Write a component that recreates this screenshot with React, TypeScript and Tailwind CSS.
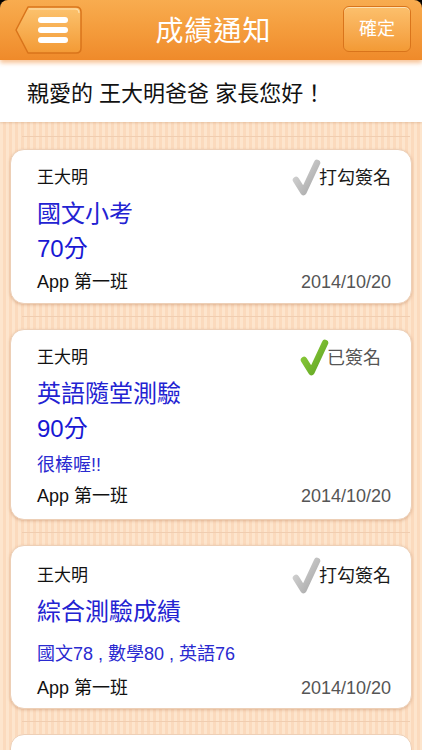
import type { ReactNode } from 'react'

type Notice = {
  title: string
  score?: string
  note?: string
  signed: boolean
}

const notices: Notice[] = [
  { title: '國文小考', score: '70分', signed: false },
  { title: '英語隨堂測驗', score: '90分', note: '很棒喔!!', signed: true },
  { title: '綜合測驗成績', note: '國文78 , 數學80 , 英語76', signed: false },
]

function MenuButton() {
  return (
    <svg width="70" height="50" viewBox="0 0 70 50">
      <defs>
        <linearGradient id="menuFill" x1="0" y1="0" x2="0" y2="1">
          <stop offset="0" stopColor="#fcc36f" />
          <stop offset="1" stopColor="#f39a35" />
        </linearGradient>
      </defs>
      <path
        d="M14 2 H62 Q67 2 67 7 V43 Q67 48 62 48 H14 L2 25 Z"
        fill="url(#menuFill)"
        stroke="#d9741b"
        strokeWidth="1.5"
        strokeLinejoin="round"
      />
      <path d="M15 4 H61 Q65 4 65 8" fill="none" stroke="#fde1b0" strokeWidth="1.2" />
      <rect x="24" y="12" width="30" height="6" rx="3" fill="#fff" />
      <rect x="24" y="22" width="30" height="6" rx="3" fill="#fff" />
      <rect x="24" y="32" width="30" height="6" rx="3" fill="#fff" />
    </svg>
  )
}

function Check({ signed }: { signed: boolean }) {
  const id = signed ? 'chkGreen' : 'chkGray'
  return (
    <svg width="29" height="38" viewBox="0 0 29 38" className="-mr-[2px]">
      <defs>
        <linearGradient id={id} x1="0" y1="0" x2="1" y2="1">
          <stop offset="0" stopColor={signed ? '#8fcf3c' : '#d8d8d8'} />
          <stop offset="1" stopColor={signed ? '#5fa322' : '#a6a6a6'} />
        </linearGradient>
      </defs>
      <path
        d="M4 21 L11.5 33 L25 4"
        fill="none"
        stroke={`url(#${id})`}
        strokeWidth="6.5"
        strokeLinecap="round"
        strokeLinejoin="round"
      />
    </svg>
  )
}

function Separator() {
  return <div className="ml-[22px] mr-[12px] h-px bg-[#f0cdb0]" />
}

function Card({ children }: { children: ReactNode }) {
  return (
    <div className="mx-[10px] rounded-[14px] bg-white border border-[#edcfb6] shadow-[0_1px_3px_rgba(190,130,90,0.45)] pl-[26px] pr-[20px]">
      {children}
    </div>
  )
}

export default function App() {
  return (
    <div
      className="w-[422px] h-[750px] overflow-hidden bg-black flex flex-col"
      style={{ fontFamily: '"Liberation Sans", "Noto Sans CJK TC", sans-serif' }}
    >
      <header className="relative z-10 h-[60px] shrink-0 rounded-t-[8px] bg-gradient-to-b from-[#f8ac4f] via-[#f49c3c] to-[#ef8a2a] shadow-[0_3px_4px_rgba(242,150,70,0.55)] flex items-center justify-between pl-[14px] pr-[11px]">
        <MenuButton />
        <h1 className="text-[28px] text-white tracking-[1px] leading-none mt-[3px]">成績通知</h1>
        <button className="w-[68px] h-[46px] -mt-[2px] rounded-[6px] border border-[#d9741b] bg-gradient-to-b from-[#fcc06c] to-[#f39a35] shadow-[inset_0_1px_0_#fde3b5] text-white text-[18px]">
          確定
        </button>
      </header>

      <div className="relative z-[5] h-[62px] shrink-0 bg-white flex items-center pl-[27px] pt-[4px] shadow-[0_1px_2px_rgba(190,140,100,0.35)]">
        <p className="text-[22px] text-[#111]">親愛的 王大明爸爸 家長您好！</p>
      </div>

      <div className="flex-1 bg-[repeating-linear-gradient(90deg,#fde5cd_0px,#fde5cd_3px,#fbdabd_3px,#fbdabd_6px)] pt-[14px] flex flex-col">
        {notices.map((n, i) => (
          <div key={i} className="flex flex-col">
            <Separator />
            <div className="h-[12px]" />
            <Card>
              <div
                className={
                  n.score ? (n.note ? 'pt-[16px] pb-[11px]' : 'pt-[16px] pb-[9px]') : 'pt-[18px] pb-[8px]'
                }
              >
                <div className="flex items-start justify-between h-[24px]">
                  <span className="text-[17px] leading-[24px] text-[#111]">王大明</span>
                  <div className="flex items-center -mt-[7px]">
                    <Check signed={n.signed} />
                    <span
                      className={
                        n.signed
                          ? 'text-[18px] text-[#555] mr-[10px]'
                          : 'text-[18px] text-[#1a1a1a]'
                      }
                    >
                      {n.signed ? '已簽名' : '打勾簽名'}
                    </span>
                  </div>
                </div>
                <p className="mt-[7px] text-[24px] leading-[34px] text-[#2323d2]">{n.title}</p>
                {n.score && (
                  <p className="mt-[1px] text-[24px] leading-[34px] text-[#1818d4]">{n.score}</p>
                )}
                {n.note && (
                  <p
                    className={
                      n.score
                        ? 'mt-[7px] text-[18px] leading-[24px] text-[#2a2ad0]'
                        : 'mt-[13px] text-[18px] leading-[24px] text-[#2a2ad0]'
                    }
                  >
                    {n.note}
                  </p>
                )}
                <div
                  className={
                    n.note
                      ? n.score
                        ? 'mt-[7px] flex items-center justify-between text-[18px] leading-[24px]'
                        : 'mt-[10px] flex items-center justify-between text-[18px] leading-[24px]'
                      : 'mt-[4px] flex items-center justify-between text-[18px] leading-[24px]'
                  }
                >
                  <span className="text-[#111]">App 第一班</span>
                  <span className="text-[#555]">2014/10/20</span>
                </div>
              </div>
            </Card>
            <div className="h-[12px]" />
          </div>
        ))}
        <Separator />
        <div className="h-[12px]" />
        <div className="mx-[10px] h-[40px] rounded-t-[14px] bg-white border border-[#edcfb6]" />
      </div>
      <div className="h-[2px] shrink-0 bg-black" />
    </div>
  )
}
